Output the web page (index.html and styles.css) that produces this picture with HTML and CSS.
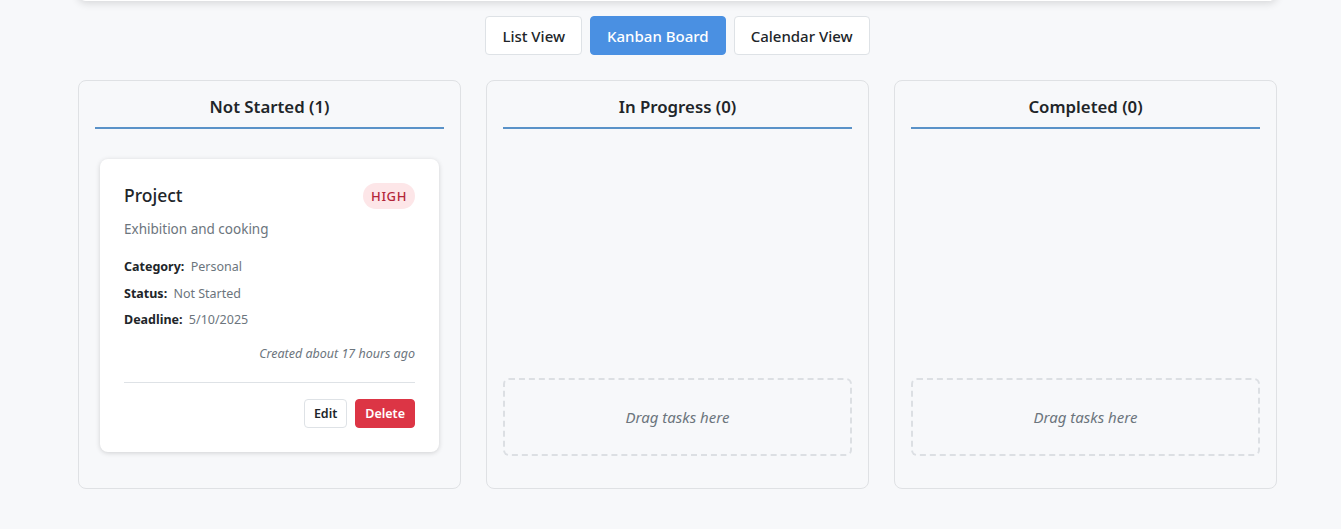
FILE: index.html
```html
<!DOCTYPE html>
<html lang="en">
<head>
<meta charset="utf-8">
<title>Kanban Board</title>
<link rel="stylesheet" href="styles.css">
</head>
<body>
<div class="page">
  <div class="top-card"></div>
  <div class="view-switch">
    <button class="view-btn">List View</button>
    <button class="view-btn active">Kanban Board</button>
    <button class="view-btn">Calendar View</button>
  </div>
  <div class="board">
    <section class="column">
      <h2 class="column-title">Not Started (1)</h2>
      <div class="task-list">
        <article class="task-card">
          <div class="task-head">
            <h3 class="task-title">Project</h3>
            <span class="badge badge-high">HIGH</span>
          </div>
          <p class="task-desc">Exhibition and cooking</p>
          <div class="task-meta">
            <div class="meta-row"><strong>Category:</strong> <span>Personal</span></div>
            <div class="meta-row"><strong>Status:</strong> <span>Not Started</span></div>
            <div class="meta-row"><strong>Deadline:</strong> <span>5/10/2025</span></div>
          </div>
          <div class="task-created">Created about 17 hours ago</div>
          <div class="task-actions">
            <button class="btn btn-edit">Edit</button>
            <button class="btn btn-delete">Delete</button>
          </div>
        </article>
      </div>
    </section>
    <section class="column">
      <h2 class="column-title">In Progress (0)</h2>
      <div class="task-list">
        <div class="dropzone">Drag tasks here</div>
      </div>
    </section>
    <section class="column">
      <h2 class="column-title">Completed (0)</h2>
      <div class="task-list">
        <div class="dropzone">Drag tasks here</div>
      </div>
    </section>
  </div>
</div>
</body>
</html>
```

FILE: styles.css
```css
* { box-sizing: border-box; }
html, body { margin: 0; padding: 0; }
body {
  background: #f7f8fa;
  font-family: "Noto Sans", "Open Sans", sans-serif;
  color: #212529;
}
.page {
  padding: 0 64px 0 78px;
}
.top-card {
  height: 30px;
  margin-top: -29px;
  background: #fff;
  border-radius: 0 0 8px 8px;
  box-shadow: 0 2px 8px rgba(0,0,0,0.14);
}
.view-switch {
  display: flex;
  justify-content: center;
  gap: 8px;
  margin-top: 15px;
  margin-bottom: 25px;
}
.view-btn {
  font-family: inherit;
  font-size: 15px;
  font-weight: 500;
  height: 39px;
  padding: 0 16px;
  background: #fff;
  color: #212529;
  border: 1px solid #dee2e6;
  border-radius: 4px;
}
.view-btn.active {
  background: #4a90e2;
  border-color: #4a90e2;
  color: #fff;
}
.board {
  display: grid;
  grid-template-columns: repeat(3, 1fr);
  gap: 25px;
}
.column {
  display: flex;
  flex-direction: column;
  height: 409px;
  padding: 14px 16px 32px;
  border: 1px solid #dfe1e4;
  border-radius: 8px;
  background: #f7f8fa;
}
.column-title {
  margin: 0 0 25px;
  padding-bottom: 8px;
  font-size: 16.8px;
  font-weight: 600;
  line-height: 24px;
  text-align: center;
  border-bottom: 2px solid #5a92c8;
}
.task-list {
  flex: 1;
  display: flex;
  flex-direction: column;
}
.task-card {
  margin: 5px;
  padding: 24px;
  background: #fff;
  border-radius: 8px;
  box-shadow: 0 1px 5px rgba(0,0,0,0.16);
}
.task-head {
  display: flex;
  justify-content: space-between;
  align-items: flex-start;
  margin-bottom: 10px;
}
.task-title {
  margin: 0;
  font-size: 17.5px;
  font-weight: 500;
  line-height: 24px;
}
.badge {
  font-size: 13px;
  font-weight: 500;
  letter-spacing: 0.6px;
  line-height: 18px;
  padding: 4px 8px;
  border-radius: 13px;
}
.badge-high {
  background: #fde6e8;
  color: #b3263a;
}
.task-desc {
  margin: 0 0 18px;
  font-size: 13.5px;
  line-height: 20px;
  color: #6c757d;
}
.meta-row {
  font-size: 12.5px;
  line-height: 19.5px;
  margin-bottom: 7px;
  color: #6c757d;
}
.meta-row strong {
  color: #212529;
  font-weight: 700;
  margin-right: 3px;
}
.task-created {
  margin-top: 14.5px;
  font-size: 12.5px;
  line-height: 19.5px;
  font-style: italic;
  text-align: right;
  color: #6c757d;
}
.task-actions {
  display: flex;
  justify-content: flex-end;
  gap: 8px;
  margin-top: 18px;
  padding-top: 16px;
  border-top: 1px solid #dee2e6;
}
.btn {
  font-family: inherit;
  font-size: 12.5px;
  font-weight: 600;
  height: 29px;
  padding: 0 9px;
  border-radius: 4px;
}
.btn-edit {
  background: #fff;
  color: #212529;
  border: 1px solid #dee2e6;
}
.btn-delete {
  background: #dc3545;
  color: #fff;
  border: 1px solid #dc3545;
}
.dropzone {
  margin-top: auto;
  height: 78px;
  display: flex;
  align-items: center;
  justify-content: center;
  border: 2px dashed #dcdfe3;
  border-radius: 6px;
  font-size: 15px;
  font-style: italic;
  color: #6c757d;
}
```
